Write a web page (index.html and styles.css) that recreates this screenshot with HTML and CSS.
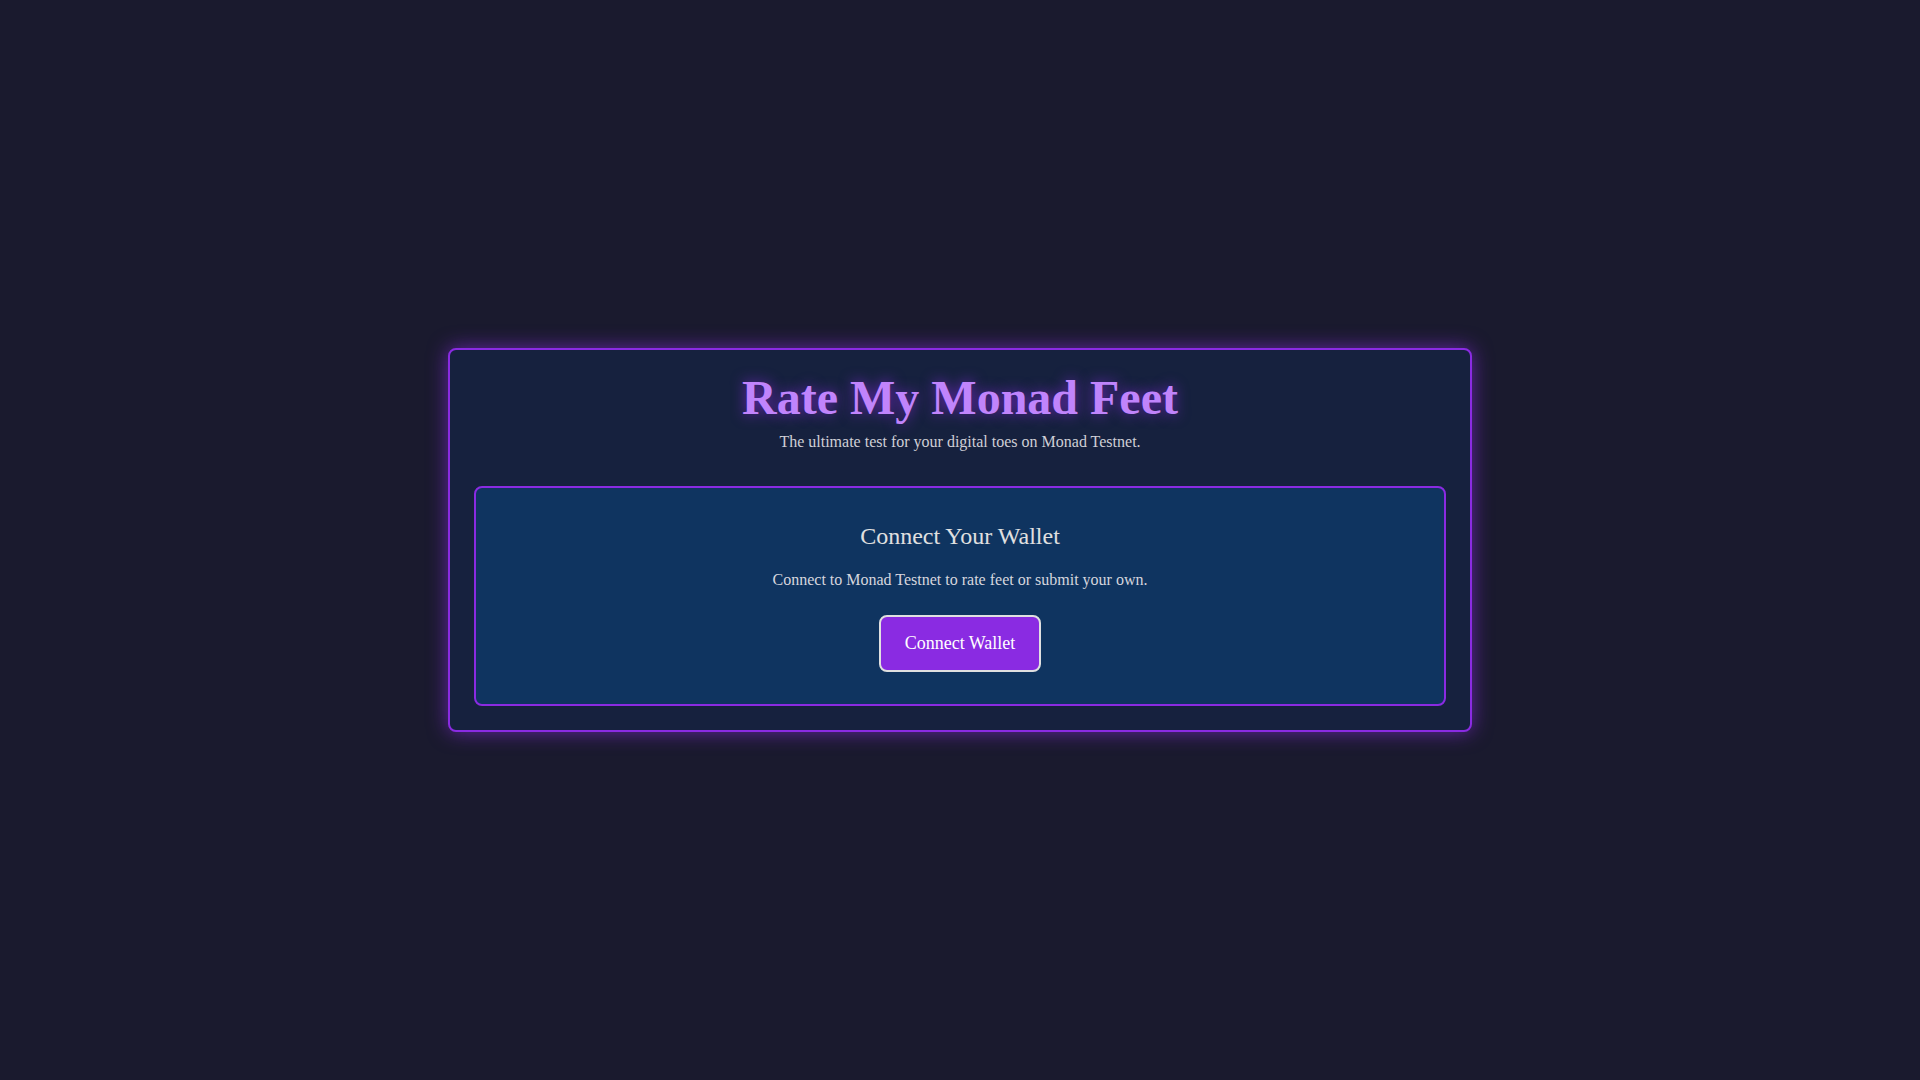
FILE: index.html
```html
<!DOCTYPE html>
<html lang="en">
<head>
<meta charset="utf-8">
<title>Rate My Monad Feet</title>
<link rel="stylesheet" href="styles.css">
</head>
<body>
<main class="card">
  <header class="header">
    <h1 class="title">Rate My Monad Feet</h1>
    <p class="subtitle">The ultimate test for your digital toes on Monad Testnet.</p>
  </header>
  <section class="connect">
    <h2 class="connect-title">Connect Your Wallet</h2>
    <p class="connect-text">Connect to Monad Testnet to rate feet or submit your own.</p>
    <button class="connect-btn" type="button">Connect Wallet</button>
  </section>
</main>
</body>
</html>
```

FILE: styles.css
```css
html, body {
  margin: 0;
  padding: 0;
}

body {
  background: #1a1a2e;
  font-family: "Liberation Serif", "Times New Roman", serif;
  line-height: 1.15;
  color: #e0e0e0;
  min-height: 100vh;
  display: flex;
  align-items: center;
  justify-content: center;
}

.card {
  box-sizing: border-box;
  width: 1024px;
  background: #16213e;
  border: 2px solid #8a2be2;
  border-radius: 8px;
  box-shadow: 0 0 20px rgba(138, 43, 226, 0.65);
  padding: 20px 24px 24px;
  display: flex;
  flex-direction: column;
}

.header {
  text-align: center;
  margin-bottom: 34.5px;
}

.title {
  margin: 0 0 8px;
  font-size: 48px;
  font-weight: bold;
  color: #c084fc;
  text-shadow: 0 0 14px rgba(138, 43, 226, 0.75);
}

.subtitle {
  margin: 0;
  font-size: 16px;
  color: #cfcfd6;
}

.connect {
  background: #0f3460;
  border: 2px solid #8a2be2;
  border-radius: 8px;
  padding: 35px 20px 32px;
  display: flex;
  flex-direction: column;
  align-items: center;
  text-align: center;
}

.connect-title {
  margin: 0 0 20px;
  font-size: 24px;
  font-weight: normal;
  color: #e0e0e0;
}

.connect-text {
  margin: 0 0 26.5px;
  font-size: 16px;
  color: #d6d6de;
}

.connect-btn {
  font-family: "Liberation Serif", "Times New Roman", serif;
  font-size: 18px;
  line-height: 1.15;
  color: #ffffff;
  background: #8a2be2;
  border: 2px solid #e0e0e0;
  border-radius: 8px;
  padding: 16px 24px;
  cursor: pointer;
}
```
